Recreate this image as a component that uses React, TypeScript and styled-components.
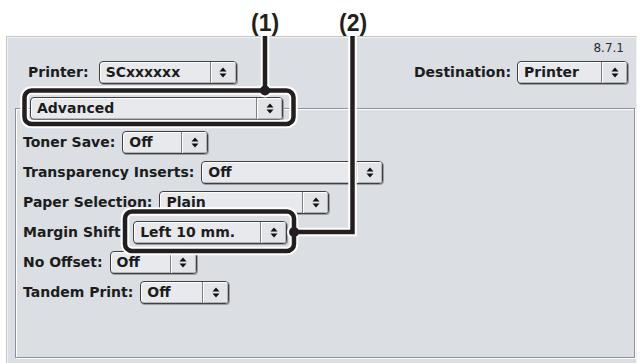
import styled, { createGlobalStyle } from "styled-components"

const GlobalStyle = createGlobalStyle`
  html, body {
    margin: 0;
    padding: 0;
    background: #ffffff;
  }
  body {
    font-family: "DejaVu Sans", "Liberation Sans", sans-serif;
    color: #1c1c1c;
  }
`

const Page = styled.div`
  position: relative;
  width: 640px;
  height: 363px;
  box-sizing: border-box;
  padding: 36px 0 0 6px;
  overflow: hidden;
  background: #ffffff;
`

const Window = styled.div`
  width: 631px;
  height: 327px;
  box-sizing: border-box;
  padding-top: 4px;
  background: #dbdee2;
  border-top: 1px solid #c3c6ca;
  border-left: 1px solid #c3c6ca;
  border-right: 1px solid #eef0f2;
  box-shadow: inset 1px 1px 0 #f1f2f4;
`

const Version = styled.div`
  height: 14px;
  line-height: 14px;
  padding-right: 12px;
  text-align: right;
  font-size: 12px;
  color: #2c2c2c;
`

const TopRow = styled.div`
  display: flex;
  align-items: center;
  justify-content: space-between;
  height: 24px;
  margin-top: 5px;
  padding: 0 8px 0 21px;
`

const Field = styled.div<{ $gap?: number }>`
  display: flex;
  align-items: center;
  gap: ${(p) => p.$gap ?? 7}px;
  height: 24px;
`

const Label = styled.span`
  font-size: 14px;
  font-weight: bold;
  white-space: nowrap;
  color: #1c1c1c;
`

const GroupBox = styled.div`
  width: 620px;
  height: 250px;
  box-sizing: border-box;
  margin: 24px 0 0 8px;
  padding-left: 7px;
  border: 1px solid #8d9094;
  box-shadow: inset 1px 1px 0 #ffffff, 1px 1px 0 #ffffff;
`

const FieldList = styled.div`
  display: flex;
  flex-direction: column;
  gap: 6px;
  margin-top: 10px;
`

const PopupBox = styled.div<{ $w: number; $title?: boolean }>`
  display: flex;
  flex: none;
  width: ${(p) => p.$w}px;
  height: 23px;
  box-sizing: border-box;
  margin: ${(p) => (p.$title ? "-12px 0 0 7px" : "0")};
  border: 1px solid #3d3f42;
  border-radius: 4px;
  background: #e8e9ec;
  box-shadow: inset 1px 1px 0 #ffffff, inset -1px -1px 0 #b4b6ba,
    1px 1px 0 #9b9da1;
  overflow: hidden;
`

const PopupText = styled.span`
  flex: 1;
  padding-left: 6px;
  font-size: 14px;
  font-weight: bold;
  line-height: 21px;
  white-space: nowrap;
  overflow: hidden;
  color: #1c1c1c;
`

const PopupArrow = styled.span`
  display: flex;
  align-items: center;
  justify-content: center;
  width: 25px;
  border-left: 1px solid #7d7f83;
  background: #e3e4e7;
  box-shadow: inset 1px 1px 0 #ffffff, inset -1px -1px 0 #b0b2b6;
`

const Overlay = styled.svg`
  position: absolute;
  left: 0;
  top: 0;
  pointer-events: none;
`

const CalloutNumber = styled.span<{ $x: number }>`
  position: absolute;
  top: 10px;
  left: ${(p) => p.$x}px;
  font-family: "Liberation Sans", Arial, sans-serif;
  font-size: 23px;
  font-weight: bold;
  line-height: 26px;
  color: #231f20;
`

function Arrows() {
  return (
    <svg width="8" height="11" viewBox="0 0 8 11">
      <path d="M0.5 4.5 L4 0.6 L7.5 4.5 Z" fill="#111" />
      <path d="M0.5 6.5 L4 10.4 L7.5 6.5 Z" fill="#111" />
    </svg>
  )
}

function Popup({
  value,
  width,
  title,
}: {
  value: string
  width: number
  title?: boolean
}) {
  return (
    <PopupBox $w={width} $title={title}>
      <PopupText>{value}</PopupText>
      <PopupArrow>
        <Arrows />
      </PopupArrow>
    </PopupBox>
  )
}

const rows = [
  { label: "Toner Save:", value: "Off", width: 86 },
  { label: "Transparency Inserts:", value: "Off", width: 182 },
  { label: "Paper Selection:", value: "Plain", width: 170 },
  { label: "Margin Shift:", value: "Left 10 mm.", width: 154 },
  { label: "No Offset:", value: "Off", width: 87 },
  { label: "Tandem Print:", value: "Off", width: 89 },
]

function Callouts() {
  const black = "#231f20"
  const shapes = (
    color: string,
    w: number,
    r: number
  ) => (
    <g stroke={color} strokeWidth={w} fill="none">
      <rect x="24.5" y="90.5" width="269" height="33.5" rx="7" />
      <rect x="125" y="211.5" width="169" height="39.5" rx="7" />
      <line x1="265" y1="36" x2="265" y2="90" />
      <polyline points="294,232 352.5,232 352.5,36" strokeLinejoin="miter" />
      <circle cx="265" cy="90.5" r={r} fill={color} stroke="none" />
      <circle cx="294" cy="232" r={r} fill={color} stroke="none" />
    </g>
  )
  return (
    <>
      <Overlay width="640" height="363" viewBox="0 0 640 363">
        {shapes("#ffffff", 8.5, 7)}
        {shapes(black, 4.5, 5)}
      </Overlay>
      <CalloutNumber $x={251}>(1)</CalloutNumber>
      <CalloutNumber $x={339}>(2)</CalloutNumber>
    </>
  )
}

export default function App() {
  return (
    <>
      <GlobalStyle />
      <Page>
        <Window>
          <Version>8.7.1</Version>
          <TopRow>
            <Field $gap={10}>
              <Label>Printer:</Label>
              <Popup value="SCxxxxxx" width={138} />
            </Field>
            <Field $gap={6}>
              <Label>Destination:</Label>
              <Popup value="Printer" width={111} />
            </Field>
          </TopRow>
          <GroupBox>
            <Popup value="Advanced" width={253} title />
            <FieldList>
              {rows.map((row) => (
                <Field key={row.label}>
                  <Label>{row.label}</Label>
                  <Popup value={row.value} width={row.width} />
                </Field>
              ))}
            </FieldList>
          </GroupBox>
        </Window>
        <Callouts />
      </Page>
    </>
  )
}
